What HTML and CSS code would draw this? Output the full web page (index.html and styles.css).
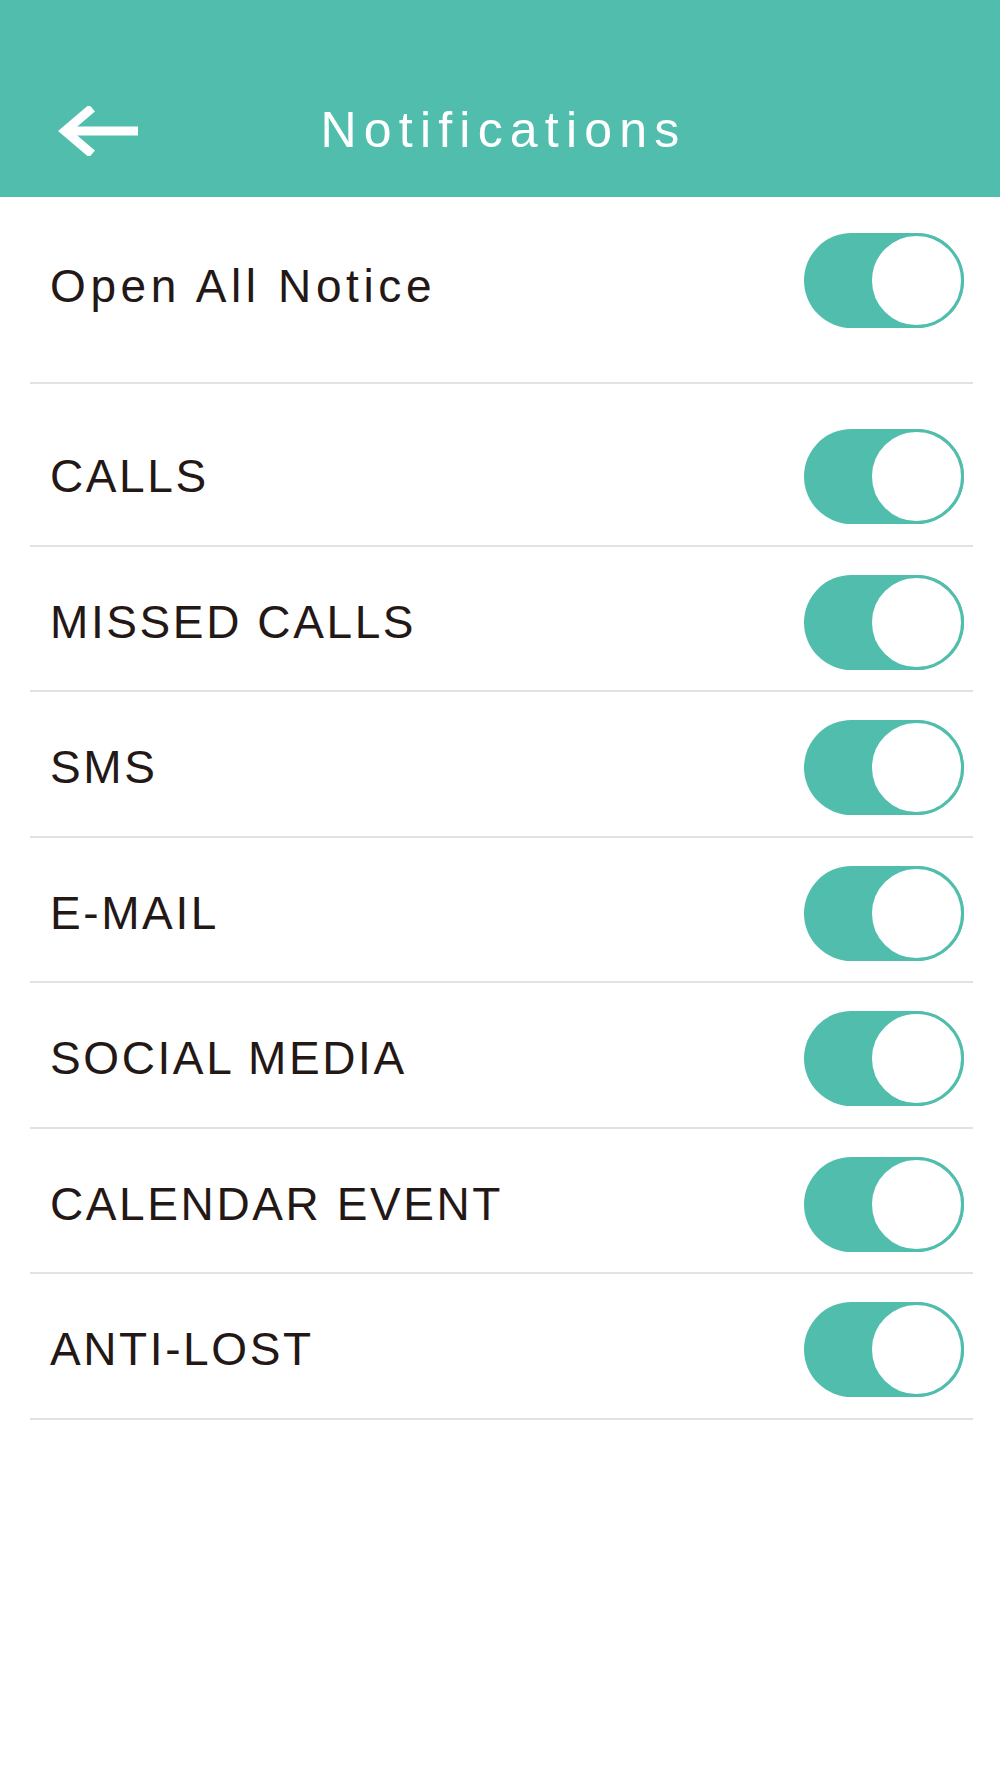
FILE: index.html
```html
<!DOCTYPE html>
<html lang="en">
<head>
    <meta charset="UTF-8">
    <meta name="viewport" content="width=device-width, initial-scale=1.0">
    <title>Notifications</title>
    <link rel="stylesheet" href="styles.css">
</head>
<body>
<header class="topbar">
    <a class="back" href="#" aria-label="Back">
        <svg width="80" height="50" viewBox="0 0 80 50">
            <polyline points="34,2 7,25 34,48" fill="none" stroke="#fff" stroke-width="9" stroke-linejoin="miter"/>
            <line x1="8" y1="25" x2="80" y2="25" stroke="#fff" stroke-width="9"/>
        </svg>
    </a>
    <h1 class="title">Notifications</h1>
    <span></span>
</header>

<div class="list">
    <div class="row row-master">
        <span class="label label-master">Open All Notice</span>
        <span class="switch"></span>
    </div>

    <div class="group">
        <div class="row">
            <span class="label">CALLS</span>
            <span class="switch"></span>
        </div>
        <div class="row">
            <span class="label">MISSED CALLS</span>
            <span class="switch"></span>
        </div>
        <div class="row">
            <span class="label">SMS</span>
            <span class="switch"></span>
        </div>
        <div class="row">
            <span class="label">E-MAIL</span>
            <span class="switch"></span>
        </div>
        <div class="row">
            <span class="label">SOCIAL MEDIA</span>
            <span class="switch"></span>
        </div>
        <div class="row">
            <span class="label">CALENDAR EVENT</span>
            <span class="switch"></span>
        </div>
        <div class="row">
            <span class="label">ANTI-LOST</span>
            <span class="switch"></span>
        </div>
    </div>
</div>
</body>
</html>
```

FILE: styles.css
```css
body {
    margin: 0;
    background: #fff;
    font-family: "Liberation Sans", Arial, sans-serif;
    color: #231815;
}
.topbar {
    display: grid;
    grid-template-columns: 1fr auto 1fr;
    align-items: center;
    height: 197px;
    box-sizing: border-box;
    padding-top: 64px;
    background-color: #51bead;
}
.back {
    display: block;
    width: 80px;
    height: 50px;
    margin-left: 58px;
}
.back svg {
    display: block;
}
.title {
    margin: 0 -7px 0 0;
    font-size: 50px;
    font-weight: normal;
    letter-spacing: 7.2px;
    color: #fff;
    line-height: 1.15;
}
.list {
    margin: 0 27px 0 30px;
}
.row {
    display: flex;
    align-items: center;
    justify-content: space-between;
    padding: 28px 9px 20.5px 20px;
    border-bottom: 2px solid #e2e2e2;
}
.row-master {
    padding-top: 36px;
    padding-bottom: 54px;
}
.group {
    margin-top: 17px;
}
.label {
    font-size: 46px;
    letter-spacing: 2.6px;
    line-height: 1.15;
}
.label-master {
    margin-top: 11px;
    letter-spacing: 4.6px;
}
.switch {
    position: relative;
    display: block;
    width: 160px;
    height: 95px;
    border-radius: 48px;
    background-color: #51bead;
}
.switch::after {
    content: "";
    position: absolute;
    top: 0;
    right: 0;
    width: 95px;
    height: 95px;
    box-sizing: border-box;
    border: 3px solid #51bead;
    border-radius: 50%;
    background: #fff;
}
```
